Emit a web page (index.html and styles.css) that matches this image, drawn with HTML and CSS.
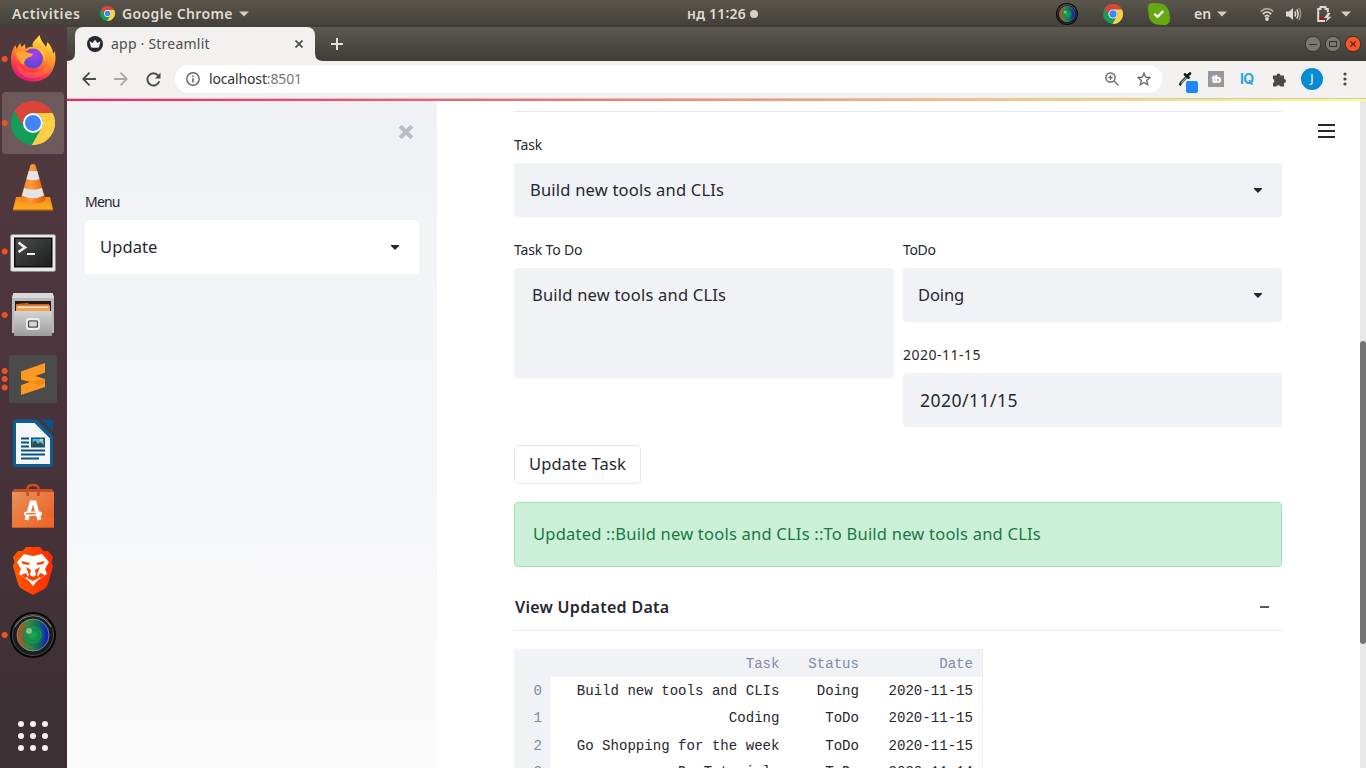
FILE: index.html
```html
<!DOCTYPE html>
<html lang="en">
<head>
<meta charset="utf-8">
<title>app · Streamlit</title>
<link rel="stylesheet" href="styles.css">
</head>
<body>
<svg class="defs" width="0" height="0">
  <defs>
    <symbol id="chrome" viewBox="11 10 44 44">
      <circle cx="33" cy="32" r="22" fill="#129d58"/>
      <path d="M52.6 22A22 22 0 0 0 14.5 20L24.3 37A10 10 0 0 1 33 22Z" fill="#dc4437"/>
      <path d="M52.6 22A22 22 0 0 1 31.8 54L41.7 37A10 10 0 0 0 33 22Z" fill="#ffce44"/>
      <circle cx="33" cy="32" r="10" fill="#fff"/>
      <circle cx="33" cy="32" r="8" fill="#4285f4"/>
    </symbol>
    <linearGradient id="lensRgb"><stop offset="0" stop-color="#c2451f"/><stop offset=".35" stop-color="#3f8a3c"/><stop offset=".65" stop-color="#146a5c"/><stop offset="1" stop-color="#1010d8"/></linearGradient>
    <radialGradient id="lensCore"><stop offset="0" stop-color="#19b04c"/><stop offset=".6" stop-color="#0e8a50" stop-opacity=".85"/><stop offset="1" stop-color="#0a6c60" stop-opacity="0"/></radialGradient>
    <symbol id="lens" viewBox="10 9 46 46">
      <circle cx="33" cy="32" r="23" fill="#050505"/>
      <circle cx="33" cy="32" r="20.5" fill="#1d1d1f" stroke="#4b4b4d" stroke-width="1"/>
      <path d="M15 24A20 20 0 0 1 51 24" fill="none" stroke="#8d8d8d" stroke-width="1"/>
      <circle cx="33" cy="32" r="16" fill="url(#lensRgb)" stroke="#8fae9c" stroke-width=".7"/>
      <circle cx="33" cy="32" r="12" fill="url(#lensCore)"/>
      <circle cx="33" cy="32" r="8" fill="none" stroke="#2d9963" stroke-width=".8"/>
      <circle cx="29" cy="28" r="3" fill="#a3d98c" opacity=".75"/>
    </symbol>
    <symbol id="caret" viewBox="0 0 10 6"><path d="M0 .5H10L5 5.5Z" fill="currentColor"/></symbol>
    <linearGradient id="ffBody" x1=".7" y1="0" x2=".3" y2="1"><stop offset="0" stop-color="#fff04a"/><stop offset=".4" stop-color="#ff9a2a"/><stop offset=".72" stop-color="#ff3f45"/><stop offset="1" stop-color="#e80d8a"/></linearGradient>
    <radialGradient id="ffGlobe" cx=".6" cy=".3" r=".7"><stop offset="0" stop-color="#a73df0"/><stop offset="1" stop-color="#544ad0"/></radialGradient>
    <linearGradient id="vlcBase" x1="0" y1="0" x2="0" y2="1"><stop offset="0" stop-color="#f58a12"/><stop offset="1" stop-color="#ffad22"/></linearGradient>
    <linearGradient id="vlcCone"><stop offset="0" stop-color="#f07a18"/><stop offset=".4" stop-color="#ff9a3a"/><stop offset="1" stop-color="#d95f06"/></linearGradient>
    <linearGradient id="steel" x1="0" y1="0" x2="0" y2="1"><stop offset="0" stop-color="#d4d4d4"/><stop offset="1" stop-color="#9d9d9d"/></linearGradient>
    <linearGradient id="screen" x1="0" y1="0" x2="1" y2="1"><stop offset="0" stop-color="#4a4c4b"/><stop offset="1" stop-color="#1d1f1e"/></linearGradient>
    <linearGradient id="bag" x1="0" y1="0" x2="1" y2="1"><stop offset="0" stop-color="#e8935a"/><stop offset="1" stop-color="#ea5a20"/></linearGradient>
    <linearGradient id="brave"><stop offset="0" stop-color="#ff5a00"/><stop offset="1" stop-color="#ff2a00"/></linearGradient>
  </defs>
</svg>

<header class="topbar">
  <span class="activities">Activities</span>
  <span class="app-menu"><svg width="15" height="15"><use href="#chrome"/></svg><b class="app-name">Google Chrome</b><svg class="tri" width="10" height="6"><use href="#caret"/></svg></span>
  <span class="clock"><b>нд 11<i>:</i>26</b><i class="notify"></i></span>
  <span class="tray">
    <svg width="22" height="22"><use href="#lens"/></svg>
    <svg class="t-chrome" width="20" height="20"><use href="#chrome"/></svg>
    <svg class="t-skype" width="22" height="22" viewBox="0 0 22 22"><path d="M1 1C4-.5 7 .4 9 .3C18-.2 22 7 21.6 13C22.500 16 22 21 18 22C15 22.500 14 21.600 11 21.700C4 21.500 0 16 .5 9C-.2 6-.3 3 1 1Z" fill="#65a912"/><path d="M7 11.500L9.700 13.800L14.500 8.800" fill="none" stroke="#fff" stroke-width="2.300" stroke-linecap="round" stroke-linejoin="round"/></svg>
    <b class="lang">en</b>
    <svg class="tri" width="10" height="6"><use href="#caret"/></svg>
    <svg class="t-wifi" width="14" height="14" viewBox="0 0 14 14" fill="none" stroke="#dcdad5"><path d="M.8 4.600Q7-1.500 13.200 4.600" stroke="#aaa8a2" stroke-width="1.700"/><path d="M2.800 7.200Q7 2.800 11.200 7.200" stroke-width="1.700"/><path d="M4.700 9.600Q7 7 9.300 9.600" stroke-width="1.700"/><circle cx="7" cy="12" r="1.900" fill="#dcdad5" stroke="none"/></svg>
    <svg class="t-vol" width="16" height="14" viewBox="0 0 16 14" fill="none" stroke="#dcdad5" stroke-width="1.500"><path d="M0 4.500H3L7 1V13L3 9.500H0Z" fill="#dcdad5" stroke="none"/><path d="M8.800 4.500Q10.500 7 8.800 9.500M10.800 2.500Q13.500 7 10.800 11.500"/><path d="M12.800 .8Q16.500 7 12.800 13.200" stroke="#96948e"/></svg>
    <svg class="t-bat" width="15" height="16" viewBox="0 0 15 16"><path d="M8 15H1.200V3H3.500V1H8.500V3H10.800V6.500" fill="none" stroke="#dcdad5" stroke-width="2"/><rect x="2.500" y="11" width="4" height="2" fill="#c00"/><path d="M10.800 7L7 12H10.300L8.800 16L14.500 10.700H11.300L13.500 7Z" fill="#dcdad5"/></svg>
    <svg class="tri t-last" width="10" height="6"><use href="#caret"/></svg>
  </span>
</header>

<div class="desk">
  <nav class="dock">
    <div class="item"><svg width="67" height="64"><circle class="run" cx="4.700" cy="32" r="3"/>
      <path d="M11 33C11 26 13 21 15.500 18L16.500 22L20 16L21.500 20L25 17L25.500 22C30 19 33 20 33 20C31 15 36 13 39.500 8C41 15 44 16 46 20L47.500 15C52 20 53 24 53 27L54.700 24C57 34 54 43 49 48.500C40 57 25 56 17 48.500C13 44.500 11 39 11 33Z" fill="url(#ffBody)"/>
      <path d="M46 22C51 32 46 43 36 45C27 47 19 42 18 36C16 45 24 52 33 51C45 51 55 42 54 30" fill="#ff9b2c" opacity=".3"/>
      <circle cx="33" cy="31.500" r="10" fill="url(#ffGlobe)"/>
      <path d="M16 26C20 23 24 25 26 25L33 27C33 29 30 30 27.500 31C24 33 24 36 24 38C20 36 17 31 16 26Z" fill="#ffa436"/><path d="M37 21.500C41 20 46 26 45 34C43.500 29 42 27 40 25C39.500 23 38.500 22 37 21.500Z" fill="#ffc13a"/></svg></div>
    <div class="item active"><svg width="67" height="64"><circle class="run" cx="4.700" cy="32" r="3"/><use href="#chrome" x="11" y="10" width="44" height="44"/></svg></div>
    <div class="item"><svg width="67" height="64">
      <path d="M16 42H50L53 54.500H13Z" fill="url(#vlcBase)"/><path d="M13 54H53V55.500H13Z" fill="#e27c08"/>
      <path d="M30.500 10Q33 8 35.500 10L45.500 44C44 50 22 50 20.500 44Z" fill="url(#vlcCone)"/>
      <path d="M28.800 16H37.200L39.500 24Q33 26.500 26.500 24ZM24.200 33Q33 36 41.800 33L44 40.500Q33 46 22 40.500Z" fill="#e3e4e4"/></svg></div>
    <div class="item"><svg width="67" height="64"><circle class="run" cx="4.700" cy="32.500" r="3"/>
      <rect x="10.500" y="15.500" width="45" height="37" rx="2" fill="#e8e8e8" stroke="#8b8b8b"/><rect x="14" y="18.500" width="38.500" height="30" fill="#0d0d0d"/><rect x="15.500" y="20" width="35.500" height="27" fill="url(#screen)"/>
      <path d="M18.500 23.500L25 28.500L18.500 33" fill="none" stroke="#f2f2f2" stroke-width="2.600"/><path d="M27 35H35" stroke="#f2f2f2" stroke-width="2"/></svg></div>
    <div class="item"><svg width="67" height="64"><circle class="run" cx="4.700" cy="32" r="3"/>
      <path d="M13.500 10H52.500L54 14V50H12V14Z" fill="#b9b9b9"/><path d="M13.500 10H52.500L54 15H12Z" fill="#d8d8d8"/><rect x="15" y="18" width="36" height="10" fill="#221b17"/><path d="M16 21L27 20L30 21H49V26H16Z" fill="#d55d1d"/><path d="M16 22.500H50V28H16Z" fill="#f3a04c"/><path d="M18 24.300H48" stroke="#fff" stroke-width="1.200"/>
      <rect x="14" y="28" width="38" height="25" rx="1" fill="url(#steel)"/><rect x="27" y="36" width="12" height="10" rx="2" fill="none" stroke="#ededed" stroke-width="2"/><rect x="28.500" y="38" width="9" height="6" rx="1" fill="#d6d6d6" stroke="#444" stroke-width="1.200"/></svg></div>
    <div class="item"><svg width="67" height="64"><circle class="run" cx="4.700" cy="24" r="3"/><circle class="run" cx="4.700" cy="32" r="3"/><circle class="run" cx="4.700" cy="40.500" r="3"/>
      <rect x="9" y="8" width="48" height="48" rx="2.500" fill="#4b4b4b"/><path d="M21 24.500L45 16V25.500L35.500 29L45 32V40L21 48V38L30 35L21 32.500Z" fill="#ff9820"/><path d="M30 35L45 32V36L40 38.500Z" fill="#d97b11" opacity=".5"/></svg></div>
    <div class="item"><svg width="67" height="64">
      <path d="M16 8.500H36.500L53 25V53Q53 56 50 56H16Q13 56 13 53V11.500Q13 8.500 16 8.500Z" fill="#075f94"/><path d="M41 8.500H53V20.500Z" fill="#07558c"/><path d="M16 12H34.500L50 27.500V53H16Z" fill="#f5f5f5"/>
      <rect x="31" y="26.500" width="14" height="10" fill="#075481"/><rect x="32.500" y="28" width="11" height="7" fill="#58b9ec"/><path d="M32.500 35V32L35 29.500L38 33L40 31L43.500 34V35Z" fill="#384b3d"/><circle cx="41.500" cy="29" r="1.500" fill="#f4c542"/>
      <path d="M21 27.500H29M21 31.500H29M21 35.500H29M21 39.500H45M21 43.500H45M21 47.500H39" stroke="#075481" stroke-width="2"/></svg></div>
    <div class="item"><svg width="67" height="64">
      <path d="M14 14H52L54 17V52.500H12V17Z" fill="#c44d23"/><rect x="12" y="17" width="42" height="35.500" fill="url(#bag)"/><path d="M12 43H54V52.500H12Z" fill="#ff7a35" opacity=".3"/>
      <path d="M27.500 21V14Q27.500 10 33 10Q38.500 10 38.500 14V21" fill="none" stroke="#cf4a20" stroke-width="2.600"/>
      <path d="M26.500 45L31.500 27.500H34.500L39.500 45" fill="none" stroke="#fff" stroke-width="4"/><rect x="24" y="36.500" width="18" height="4.500" rx="2.200" fill="#fff"/><path d="M26 38.700H36" stroke="#f07a3c" stroke-width="1.600"/></svg></div>
    <div class="item"><svg width="67" height="64">
      <path d="M26 8H40L43.500 12H48L53 18L51.500 23L53 27L48 45Q47 48 44 50L33 56L22 50Q19 48 18 45L13 27L14.500 23L13 18L18 12H22.500Z" fill="url(#brave)"/>
      <path d="M24 15L33 17L42 15L49 23L45 30L47 35L41 39L37 42L33 47L29 42L25 39L19 35L21 30L17 23Z" fill="#fff"/><path d="M21 22L30 24L28.500 26L23 25ZM45 22L36 24L37.500 26L43 25ZM26 28L31 31L30 36L33 38L36 36L35 31L40 28L37 36L39 39L33 42L27 39L29 36Z" fill="#ff4200"/><path d="M21 36L26 34L28 38L25 39ZM45 36L40 34L38 38L41 39Z" fill="#ff4200"/></svg></div>
    <div class="item"><svg width="67" height="64"><circle class="run" cx="4.700" cy="32" r="3"/><use href="#lens" x="10" y="9" width="46" height="46"/></svg></div>
    <div class="apps"><svg width="30" height="30" fill="#f1efee"><circle cx="3" cy="3" r="3"/><circle cx="15" cy="3" r="3"/><circle cx="27" cy="3" r="3"/><circle cx="3" cy="15" r="3"/><circle cx="15" cy="15" r="3"/><circle cx="27" cy="15" r="3"/><circle cx="3" cy="27" r="3"/><circle cx="15" cy="27" r="3"/><circle cx="27" cy="27" r="3"/></svg></div>
  </nav>

  <div class="browser">
    <div class="tabs">
      <svg class="flare" width="8" height="8"><path d="M8 0V8H0Q8 8 8 0Z" fill="#f2f1f0"/></svg>
      <div class="tab">
        <svg width="16" height="16" viewBox="0 0 16 16"><circle cx="8" cy="8" r="8" fill="#262730"/><path d="M2.500 5.200L5.500 7L8 3.800L10.500 7L13.500 5.200L12 11.200Q8 12.200 4 11.200Z" fill="#f4f4f4"/></svg>
        <span class="tab-title">app · Streamlit</span>
        <svg class="tab-x" width="8" height="8"><path d="M.5 .5L7.500 7.500M7.500 .5L.5 7.500" stroke="#4c4c4a" stroke-width="1.700"/></svg>
      </div>
      <svg class="flare" width="8" height="8"><path d="M0 0V8H8Q0 8 0 0Z" fill="#f2f1f0"/></svg>
      <svg class="plus" width="12" height="12"><path d="M6 0V12M0 6H12" stroke="#e4e2dd" stroke-width="2"/></svg>
      <div class="wm">
        <svg width="16" height="16"><circle cx="8" cy="8" r="7.700" fill="#7b796f" stroke="#34332f"/><path d="M4 8.500H12" stroke="#34332f"/></svg>
        <svg width="16" height="16"><circle cx="8" cy="8" r="7.700" fill="#7b796f" stroke="#34332f"/><rect x="4.500" y="5.500" width="7" height="5" fill="none" stroke="#34332f"/></svg>
        <svg width="16" height="16"><circle cx="8" cy="8" r="7.700" fill="#f4582c" stroke="#4a2a1c"/><path d="M5.300 5.300L10.700 10.700M10.700 5.300L5.300 10.700" stroke="#5b1e0c" stroke-width="1.200"/></svg>
      </div>
    </div>
    <div class="toolbar">
      <svg class="nav" width="14" height="14" fill="none" stroke="#4a4a49" stroke-width="1.800"><path d="M14 7H1.500M7.500 .7L1.200 7L7.500 13.300"/></svg>
      <svg class="nav" width="14" height="14" fill="none" stroke="#aaa9a7" stroke-width="1.800"><path d="M0 7H12.500M6.500 .7L12.800 7L6.500 13.300"/></svg>
      <svg class="nav" width="15" height="15" viewBox="0 0 15 15"><path d="M12.200 3.500A6.100 6.100 0 1 0 13.300 9.300" fill="none" stroke="#4a4a49" stroke-width="1.900"/><path d="M14.500 .8V6.500H8.800Z" fill="#4a4a49"/></svg>
      <div class="omni">
        <svg width="14" height="14" fill="none" stroke="#5f6368" stroke-width="1.400"><circle cx="7" cy="7" r="6.200"/><path d="M7 6.200V10.500M7 3.500V5" stroke-width="1.600"/></svg>
        <span class="url">localhost<em>:8501</em></span>
        <svg class="mag" width="14" height="14" fill="none" stroke="#6a6a69" stroke-width="1.500"><circle cx="5.500" cy="5.500" r="4.600"/><path d="M9 9L13.500 13.500M5.500 3.300V7.700M3.300 5.500H7.700" stroke-width="1.300"/></svg>
        <svg class="star" width="14" height="14" viewBox="0 0 14 14"><path d="M7 1.200L8.700 5.200L13 5.600L9.700 8.400L10.700 12.700L7 10.400L3.300 12.700L4.300 8.400L1 5.600L5.300 5.200Z" fill="none" stroke="#5f6368" stroke-width="1.300"/></svg>
      </div>
      <svg class="e1" width="20" height="22" viewBox="0 0 20 22"><path d="M9.500 5L2.800 12L1.800 14.500" fill="none" stroke="#333" stroke-width="2.600"/><path d="M8.500 6.300L3.300 12" stroke="#68b88b" stroke-width="1.200"/><path d="M7 3.500L10.500 6.500M9.500 4.500L12 2.500" stroke="#191919" stroke-width="2.800" stroke-linecap="round"/><rect x="8" y="10" width="12" height="12" rx="2" fill="#1e88fa"/></svg>
      <span class="e2"><b>tb</b></span>
      <b class="e3">IQ</b>
      <svg class="e4" width="15" height="15" viewBox="0 0 15 15"><path d="M1 3.500H4.500A2 2 0 1 1 8.500 3.500H12V7A2 2 0 1 1 12 11V14.500H8.500A2.200 2.200 0 0 0 4.500 14.500H1V11A2.200 2.200 0 0 0 1 7Z" fill="#4a4a49"/></svg>
      <span class="avatar">J</span>
      <svg class="more" width="4" height="14" fill="#4a4a49"><circle cx="2" cy="2" r="1.600"/><circle cx="2" cy="7" r="1.600"/><circle cx="2" cy="12" r="1.600"/></svg>
    </div>
    <div class="rainbow"></div>

    <div class="page">
      <aside class="sidebar">
        <svg class="close" width="16" height="16"><path d="M2.200 2.200L13.800 13.800M13.800 2.200L2.200 13.800" stroke="#bcbdc2" stroke-width="4.200"/></svg>
        <label class="label menu">Menu</label>
        <div class="field white"><span>Update</span><svg class="arrow" width="8" height="5"><path d="M0 0H8V1L4 5L0 1Z"/></svg></div>
      </aside>
      <main class="main">
        <div class="rule"></div>
        <label class="label">Task</label>
        <div class="field"><span>Build new tools and CLIs</span><svg class="arrow" width="8" height="5"><path d="M0 0H8V1L4 5L0 1Z"/></svg></div>
        <div class="cols">
          <div><label class="label">Task To Do</label><div class="field area"><span>Build new tools and CLIs</span></div></div>
          <div>
            <label class="label todo">ToDo</label>
            <div class="field status"><span>Doing</span><svg class="arrow" width="8" height="5"><path d="M0 0H8V1L4 5L0 1Z"/></svg></div>
            <label class="label digits">2020-11-15</label>
            <div class="field input"><span>2020/11/15</span></div>
          </div>
        </div>
        <div class="btn">Update Task</div>
        <div class="alert">Updated ::Build new tools and CLIs ::To Build new tools and CLIs</div>
        <div class="expander"><b>View Updated Data</b><svg width="9" height="2"><rect width="9" height="2" fill="#56565d"/></svg></div>
        <div class="table">
          <div class="row head"><span></span><span>Task</span><span>Status</span><span>Date</span></div>
          <div class="row"><span>0</span><span>Build new tools and CLIs</span><span>Doing</span><span>2020-11-15</span></div>
          <div class="row"><span>1</span><span>Coding</span><span>ToDo</span><span>2020-11-15</span></div>
          <div class="row"><span>2</span><span>Go Shopping for the week</span><span>ToDo</span><span>2020-11-15</span></div>
          <div class="row"><span>3</span><span>Do Tutorials</span><span>ToDo</span><span>2020-11-14</span></div>
        </div>
      </main>
      <div class="burger-col"><svg width="17" height="15"><path d="M0 1H17M0 7H17M0 13H17" stroke="#262730" stroke-width="2"/></svg></div>
      <div class="scroll"><div class="thumb"></div></div>
    </div>
  </div>
</div>
</body>
</html>
```

FILE: styles.css
```css
* { box-sizing: border-box; }
body { margin: 0; width: 1366px; height: 768px; overflow: hidden; display: flex; flex-direction: column; font-family: "Noto Sans", "Open Sans", sans-serif; background: #fff; }
svg { display: block; flex: none; }
svg.defs { height: 0; }
i, em { font-style: normal; }

.topbar { height: 27px; flex: none; display: grid; grid-template-columns: 100px 587px 369px 310px; align-items: center; background: linear-gradient(#5a564c, #413f39); color: #dfdbd2; font-size: 14px; font-weight: 600; line-height: 27px; white-space: nowrap; }
.topbar b { font-weight: 600; }
.activities { padding-left: 12px; letter-spacing: .6px; }
.app-menu { display: flex; align-items: center; gap: 6px; letter-spacing: .38px; }
.app-name { margin-left: 1px; }
.tri { color: #cfccc5; }
.clock { display: flex; align-items: center; gap: 4px; letter-spacing: .2px; }
.topbar .clock b { font-weight: 600; }
.clock b i { position: relative; top: -1px; }
.notify { width: 8px; height: 8px; border-radius: 50%; background: #d3d0ca; }
.tray { display: flex; align-items: center; height: 27px; }
.t-chrome { margin-left: 25px; }
.t-skype { margin-left: 25px; }
.lang { margin-left: 24px; margin-right: 6px; }
.t-wifi { margin-left: 33px; }
.t-vol { margin-left: 12px; }
.t-bat { margin-left: 15px; }
.t-last { margin-left: 9px; }

.desk { flex: 1; display: flex; min-height: 0; }
.dock { width: 67px; flex: none; display: flex; flex-direction: column; background: linear-gradient(#513a3e, #4b343c 45%, #3b3033); }
.item { height: 64px; flex: none; }
.item.active { background: #6d595c; clip-path: inset(1px 3px 1px 2px round 4px); }
.run { fill: #e95420; }
.apps { margin: 54px 0 0 18px; }

.browser { flex: 1; display: flex; flex-direction: column; min-width: 0; }
.tabs { height: 34px; flex: none; display: flex; align-items: flex-end; background: linear-gradient(#5b584f, #3e3d38); }
.tab { width: 240px; height: 34px; display: flex; align-items: center; background: #f2f1f0; border-radius: 8px 8px 0 0; padding: 0 12px; color: #4d4d4b; font-size: 14px; }
.tab-title { margin-left: 8px; flex: 1; white-space: nowrap; letter-spacing: .22px; padding-bottom: 2px; }
.plus { margin: 0 0 11px 8px; }
.wm { margin-left: auto; display: flex; gap: 4px; padding: 0 5px 9px 0; }

.toolbar { height: 37px; flex: none; display: flex; align-items: center; background: #f2f1f0; padding: 0 19px 1px 15px; }
.nav { margin-right: 18px; }
.omni { height: 28px; width: 987px; margin-left: -4px; border-radius: 14px; background: #fff; display: flex; align-items: center; padding: 0 11px; }
.url { font-size: 14px; color: #333; margin-left: 9px; flex: 1; letter-spacing: -.15px; padding-bottom: 1px; }
.url em { color: #777; }
.mag { margin-right: 18px; }
.e1 { margin: 5px 0 0 16px; }
.e2 { width: 16px; height: 16px; margin-left: 10px; background: #989898; color: #fff; font: 900 10px/16px "Inter", sans-serif; text-align: center; letter-spacing: -1px; }
.e3 { margin-left: 16px; width: 16px; font: 700 14px/16px "Inter", sans-serif; color: #2ba6df; letter-spacing: -.6px; }
.e4 { margin-left: 16px; }
.avatar { margin-left: 14px; width: 22px; height: 22px; border-radius: 50%; background: #048bd1; color: #fff; font-size: 12px; line-height: 22px; text-align: center; }
.more { margin-left: auto; }
.rainbow { height: 3px; flex: none; background: linear-gradient(90deg, #fb1e66, #ff6570 35%, #ffb870 68%, #fffd80) 0 1px / 100% 2px no-repeat #c9c9c8; }

.page { flex: 1; display: flex; min-height: 0; color: #262730; }
.sidebar { width: 370px; flex: none; padding: 23px 18px 0; background: linear-gradient(#eff1f5, #fafafa 95%); display: flex; flex-direction: column; }
.close { align-self: flex-end; margin: 0 5.500px 51px 0; }
.label { display: block; height: 20px; margin-bottom: 8px; font-size: 14px; line-height: 20px; letter-spacing: -.15px; white-space: nowrap; }
.sidebar .label { margin-top: 1px; letter-spacing: -.8px; }
.label.digits { letter-spacing: .5px; }
.label.todo { letter-spacing: -.35px; }
.field { height: 54px; border-radius: 4px; background: #f0f2f6; display: flex; align-items: center; justify-content: space-between; padding: 0 20px 0 15px; font-size: 16.5px; line-height: 24px; letter-spacing: .21px; white-space: nowrap; }
.main .field { padding-left: 16px; }
.sidebar .white { background: #fff; letter-spacing: .1px; }
.sidebar .label, .sidebar .white { flex: none; }
.arrow { fill: #262730; }
.main { flex: none; width: 768px; margin-left: 77px; overflow: hidden; }
.rule { height: 1px; margin: 10px 0 23px; background: #e6e8ef; }
.cols { margin-top: 23px; display: grid; grid-template-columns: 380px 379px; gap: 9px; }
.main .area { height: 110px; align-items: flex-start; padding: 15px 18px; }
.main .status { padding-left: 15px; letter-spacing: -.1px; }
.cols .field + .label { margin-top: 23px; }
.main .input { padding-left: 17px; font-size: 17.600px; letter-spacing: .45px; }
.btn { width: 127px; height: 39px; margin-top: 18px; border: 1px solid #e6e8f0; border-radius: 4px; text-align: center; font-size: 16.5px; line-height: 36px; letter-spacing: .2px; }
.alert { height: 65px; margin-top: 18px; padding-left: 18px; border: 1px solid #a1e3b5; border-radius: 4px; background: #ccefd8; color: #157a42; font-size: 16.5px; line-height: 62px; letter-spacing: .22px; white-space: nowrap; }
.expander { height: 64px; border-bottom: 1px solid #e3e8f0; display: flex; justify-content: space-between; align-items: center; padding: 16px 13px 0 1px; font-size: 16px; letter-spacing: .3px; }
.expander b { font-weight: 600; }
.table { width: 469px; margin-top: 18px; border-right: 1px solid #eceef3; font: 14.08px/29px "Liberation Mono", monospace; }
.row { display: grid; grid-template-columns: 37px 228.500px 79.500px 123px; height: 27.300px; white-space: pre; text-align: right; }
.row span:first-child { background: #f0f2f6; color: #7f8aa3; padding-right: 9px; }
.row span:last-child { padding-right: 9px; }
.row.head { height: 28px; line-height: 31px; background: #f0f2f6; color: #7f8aa3; }
.row:last-child { line-height: 27px; }
.burger-col { width: 78px; padding: 23px 0 0 36px; }
.scroll { width: 6px; background: #e8e8e8; padding-top: 240px; }
.thumb { height: 303px; border-radius: 3px; background: #737373; }
```
